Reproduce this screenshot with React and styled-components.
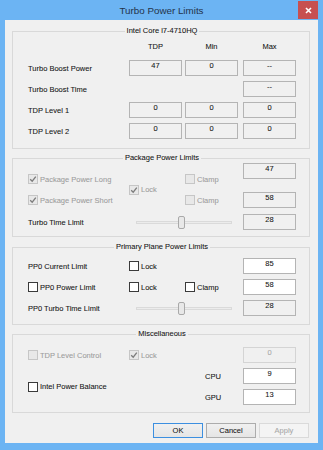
import React from 'react';
import styled, { createGlobalStyle } from 'styled-components';

const Global = createGlobalStyle`
    html, body {
        margin: 0;
        padding: 0;
        background: #6cb4f3;
    }
    * {
        box-sizing: border-box;
    }
`;

const Window = styled.div`
    width: 323px;
    height: 450px;
    padding: 0 5px 7px;
    background: #6cb4f3;
    display: flex;
    flex-direction: column;
    font-family: 'Liberation Sans', Arial, sans-serif;
    font-size: 7.5px;
    color: #141414;
`;

const TitleBar = styled.div`
    height: 20px;
    display: grid;
    grid-template-columns: 1fr auto 1fr;
    align-items: center;
`;

const Title = styled.div`
    grid-column: 2;
    font-size: 9.8px;
    color: #24334a;
    line-height: 12px;
    padding-top: 1px;
`;

const Close = styled.div`
    grid-column: 3;
    justify-self: end;
    align-self: start;
    width: 20px;
    height: 18px;
    margin-top: 1px;
    background: #c75050;
    display: flex;
    align-items: center;
    justify-content: center;
`;

const Client = styled.div`
    flex: 1;
    background: #f0f0f0;
    display: flex;
    flex-direction: column;
    -webkit-text-stroke: 0.07px currentColor;
`;

const Group = styled.fieldset`
    margin: ${({ $mt }) => $mt}px 8px 0 7px;
    padding: ${({ $pt }) => $pt}px 13px ${({ $pb }) => $pb}px 15px;
    border: 1px solid #d9d9d9;
    min-width: 0;
`;

const Legend = styled.legend`
    margin: 0 auto;
    padding: 0 2px;
    line-height: 10px;
    font-size: 7.5px;
    color: #141414;
`;

const Grid = styled.div`
    display: grid;
    grid-template-columns: ${({ $cols }) => $cols || '101px 56px 58px 53px'};
    grid-template-rows: ${({ $rows }) => $rows};
    row-gap: ${({ $gap }) => $gap || 0}px;
    padding-top: ${({ $pt }) => $pt || 0}px;
`;

const Split = styled.div`
    display: flex;
`;

const Stack = styled.div`
    display: flex;
    flex-direction: column;
    width: 53px;
`;

const Cell = styled.div`
    grid-column: ${({ $col }) => $col};
    grid-row: ${({ $row }) => $row};
    display: flex;
    align-items: center;
    padding-left: ${({ $pl }) => $pl || 0}px;
    white-space: nowrap;
`;

const Head = styled.div`
    grid-column: ${({ $col }) => $col};
    width: 53px;
    text-align: center;
    line-height: 10px;
`;

const Field = styled.div`
    width: 53px;
    height: 16px;
    margin-top: ${({ $mt }) => $mt || 0}px;
    line-height: 10px;
    text-align: center;
    border: 1px solid ${({ $kind }) => ($kind === 'off' ? '#d4d4d4' : '#b4b4b4')};
    background: ${({ $kind }) => ($kind === 'edit' ? '#fff' : '#f0f0f0')};
    color: ${({ $kind }) => ($kind === 'off' ? '#a8a8a8' : '#141414')};
`;

const CheckLabel = styled.label`
    display: flex;
    align-items: center;
    gap: 2px;
    color: ${({ $off }) => ($off ? '#9c9c9c' : '#141414')};
    white-space: nowrap;
`;

const Square = styled.span`
    width: 10px;
    height: 10px;
    border: 1px solid ${({ $off }) => ($off ? '#c6c6c6' : '#3a3a3a')};
    background: ${({ $off }) => ($off ? '#e8e8e8' : '#fff')};
    display: flex;
    align-items: center;
    justify-content: center;
`;

const Slider = styled.div`
    display: grid;
    width: 96px;
    height: 16px;
    margin-left: 7px;
`;

const Rail = styled.div`
    grid-area: 1 / 1;
    align-self: center;
    height: 3px;
    background: #ececec;
    border: 1px solid #dadada;
`;

const Thumb = styled.svg`
    grid-area: 1 / 1;
    align-self: center;
    margin-left: ${({ $at }) => $at}px;
`;

const Buttons = styled.div`
    display: flex;
    justify-content: flex-end;
    gap: 3px;
    margin: 10px 9px 0 0;
`;

const Button = styled.div`
    width: 50px;
    height: 15px;
    line-height: 13px;
    text-align: center;
    border: 1px solid ${({ $kind }) => ($kind === 'default' ? '#3c8fe0' : $kind === 'off' ? '#dadada' : '#acacac')};
    background: ${({ $kind }) =>
        $kind === 'off' ? '#f4f4f4' : 'linear-gradient(#f0f0f0, #e5e5e5)'};
    color: ${({ $kind }) => ($kind === 'off' ? '#a8a8a8' : '#141414')};
`;

const Check = ({ label, checked, off }) => (
    <CheckLabel $off={off}>
        <Square $off={off}>
            {checked && (
                <svg width="8" height="8" viewBox="0 0 8 8">
                    <path d="M1.2 4.2 L3.2 6.2 L6.8 1.6" fill="none" stroke={off ? '#7c7c7c' : '#222'} strokeWidth="1.3" />
                </svg>
            )}
        </Square>
        {label}
    </CheckLabel>
);

const TimeSlider = () => (
    <Slider>
        <Rail />
        <Thumb $at={42} width="7" height="13" viewBox="0 0 7 13">
            <rect x="0.5" y="0.5" width="6" height="12" rx="1.5" fill="#e8e8e8" stroke="#a9a9a9" />
        </Thumb>
    </Slider>
);

const App = () => {
    return (
        <Window>
            <Global />
            <TitleBar>
                <Title>Turbo Power Limits</Title>
                <Close>
                    <svg width="7" height="7" viewBox="0 0 7 7">
                        <path d="M1 1 L6 6 M6 1 L1 6" stroke="#fff" strokeWidth="1.6" />
                    </svg>
                </Close>
            </TitleBar>
            <Client>
                <Group $mt={6} $pt={6} $pb={9}>
                    <Legend>Intel Core i7-4710HQ</Legend>
                    <Grid $rows="10px">
                        <Head $col={2}>TDP</Head>
                        <Head $col={3}>Min</Head>
                        <Head $col={4}>Max</Head>
                    </Grid>
                    <Grid $rows="16px 16px 16px 16px" $gap={5} $pt={8}>
                        <Cell $col={1} $row={1}>Turbo Boost Power</Cell>
                        <Cell $col={2} $row={1}><Field>47</Field></Cell>
                        <Cell $col={3} $row={1}><Field>0</Field></Cell>
                        <Cell $col={4} $row={1}><Field>--</Field></Cell>
                        <Cell $col={1} $row={2}>Turbo Boost Time</Cell>
                        <Cell $col={4} $row={2}><Field>--</Field></Cell>
                        <Cell $col={1} $row={3}>TDP Level 1</Cell>
                        <Cell $col={2} $row={3}><Field>0</Field></Cell>
                        <Cell $col={3} $row={3}><Field>0</Field></Cell>
                        <Cell $col={4} $row={3}><Field>0</Field></Cell>
                        <Cell $col={1} $row={4}>TDP Level 2</Cell>
                        <Cell $col={2} $row={4}><Field>0</Field></Cell>
                        <Cell $col={3} $row={4}><Field>0</Field></Cell>
                        <Cell $col={4} $row={4}><Field>0</Field></Cell>
                    </Grid>
                </Group>

                <Group $mt={4} $pt={0} $pb={6}>
                    <Legend>Package Power Limits</Legend>
                    <Split>
                        <Grid $cols="101px 56px 58px" $rows="10px 11px 10px 9px 16px" $pt={11}>
                            <Cell $col={1} $row={1}><Check label="Package Power Long" checked off /></Cell>
                            <Cell $col={3} $row={1}><Check label="Clamp" off /></Cell>
                            <Cell $col={2} $row="1 / 4"><Check label="Lock" checked off /></Cell>
                            <Cell $col={1} $row={3}><Check label="Package Power Short" checked off /></Cell>
                            <Cell $col={3} $row={3}><Check label="Clamp" off /></Cell>
                            <Cell $col={1} $row={5}>Turbo Time Limit</Cell>
                            <Cell $col="2 / 4" $row={5}><TimeSlider /></Cell>
                        </Grid>
                        <Stack>
                            <Field>47</Field>
                            <Field $mt={13}>58</Field>
                            <Field $mt={6}>28</Field>
                        </Stack>
                    </Split>
                </Group>

                <Group $mt={5} $pt={6} $pb={8}>
                    <Legend>Primary Plane Power Limits</Legend>
                    <Grid $rows="16px 16px 16px" $gap={5}>
                        <Cell $col={1} $row={1}>PP0 Current Limit</Cell>
                        <Cell $col={2} $row={1}><Check label="Lock" /></Cell>
                        <Cell $col={4} $row={1}><Field $kind="edit">85</Field></Cell>
                        <Cell $col={1} $row={2}><Check label="PP0 Power Limit" /></Cell>
                        <Cell $col={2} $row={2}><Check label="Lock" /></Cell>
                        <Cell $col={3} $row={2}><Check label="Clamp" /></Cell>
                        <Cell $col={4} $row={2}><Field $kind="edit">58</Field></Cell>
                        <Cell $col={1} $row={3}>PP0 Turbo Time Limit</Cell>
                        <Cell $col="2 / 4" $row={3}><TimeSlider /></Cell>
                        <Cell $col={4} $row={3}><Field>28</Field></Cell>
                    </Grid>
                </Group>

                <Group $mt={4} $pt={8} $pb={7}>
                    <Legend>Miscellaneous</Legend>
                    <Grid $rows="16px 16px 16px" $gap={5}>
                        <Cell $col={1} $row={1}><Check label="TDP Level Control" off /></Cell>
                        <Cell $col={2} $row={1}><Check label="Lock" checked off /></Cell>
                        <Cell $col={4} $row={1}><Field $kind="off">0</Field></Cell>
                        <Cell $col={1} $row="2 / 4"><Check label="Intel Power Balance" /></Cell>
                        <Cell $col={3} $row={2} $pl={20}>CPU</Cell>
                        <Cell $col={4} $row={2}><Field $kind="edit">9</Field></Cell>
                        <Cell $col={3} $row={3} $pl={20}>GPU</Cell>
                        <Cell $col={4} $row={3}><Field $kind="edit">13</Field></Cell>
                    </Grid>
                </Group>

                <Buttons>
                    <Button $kind="default">OK</Button>
                    <Button>Cancel</Button>
                    <Button $kind="off">Apply</Button>
                </Buttons>
            </Client>
        </Window>
    );
};

export default App;
